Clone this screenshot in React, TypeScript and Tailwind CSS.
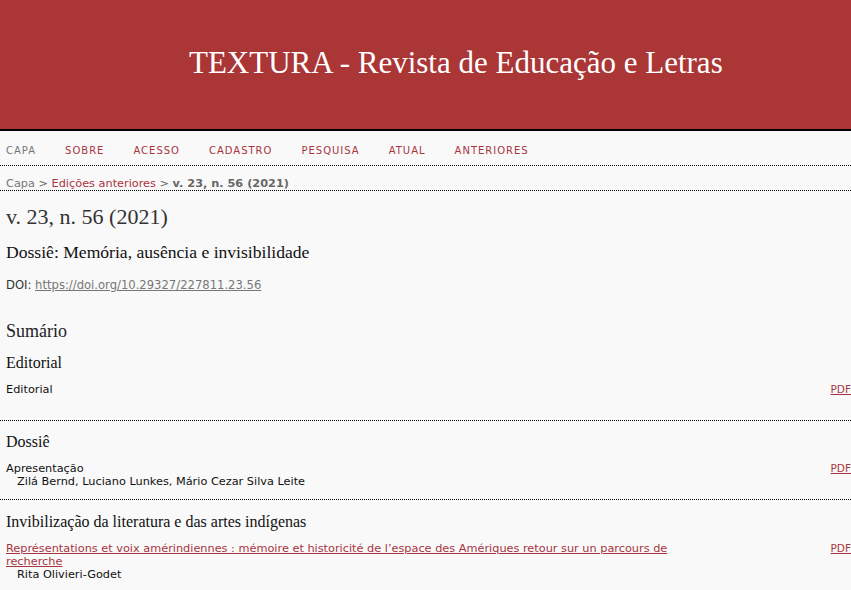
const sans = "font-['DejaVu_Sans','Verdana',sans-serif]"
const serif = "font-['Liberation_Serif','Times_New_Roman',serif]"

const navItems = ['CAPA', 'SOBRE', 'ACESSO', 'CADASTRO', 'PESQUISA', 'ATUAL', 'ANTERIORES']

function PdfLink() {
  return (
    <a href="#" className="text-[10.5px] leading-[13px] text-[#a8343f] underline shrink-0">
      PDF
    </a>
  )
}

export default function App() {
  return (
    <div className="min-h-[590px] w-[851px] bg-[#f9f9f9] text-[#111]">
      <header className="h-[131px] bg-[#aa3636] border-b-2 border-black flex items-center">
        <h1 className={`${serif} text-white text-[31px] leading-[36px] pl-[189px] -mt-[3px]`}>
          TEXTURA - Revista de Educação e Letras
        </h1>
      </header>

      <nav className={`${sans} flex gap-[29px] pl-[6px] pt-[14px] pb-[8px] border-b border-dotted border-black`}>
        {navItems.map((item, i) => (
          <a
            key={item}
            href="#"
            className={`text-[10px] leading-[12px] tracking-[1px] ${i === 0 ? 'text-[#777]' : 'text-[#a8343f]'}`}
          >
            {item}
          </a>
        ))}
      </nav>

      <div className={`${sans} text-[11.3px] leading-[13px] pl-[6px] pt-[11px] border-b border-dotted border-black text-[#666]`}>
        <a href="#" className="text-[#777]">Capa</a> &gt;{' '}
        <a href="#" className="text-[#a8343f]">Edições anteriores</a> &gt;{' '}
        <span className="font-bold text-[#666]">v. 23, n. 56 (2021)</span>
      </div>

      <main className="px-[6px]">
        <h2 className={`${serif} text-[22px] leading-[24px] mt-[14px] text-[#333]`}>v. 23, n. 56 (2021)</h2>
        <h3 className={`${serif} text-[17.6px] leading-[20px] mt-[13px] text-[#111]`}>
          Dossiê: Memória, ausência e invisibilidade
        </h3>
        <p className={`${sans} text-[11.6px] leading-[14px] mt-[16px] text-[#333]`}>
          DOI: <a href="#" className="text-[#777] underline">https://doi.org/10.29327/227811.23.56</a>
        </p>

        <h2 className={`${serif} text-[18px] leading-[22px] mt-[28px] text-[#222]`}>Sumário</h2>

        <section className="-mx-[6px] px-[6px] pb-[24px] border-b border-dotted border-black">
          <h3 className={`${serif} text-[16px] leading-[20px] mt-[11px]`}>Editorial</h3>
          <div className={`${sans} flex justify-between mt-[10px] -mr-[6px]`}>
            <div className="text-[11.3px] leading-[13px]">Editorial</div>
            <PdfLink />
          </div>
        </section>

        <section className="-mx-[6px] px-[6px] pb-[11px] border-b border-dotted border-black">
          <h3 className={`${serif} text-[16px] leading-[20px] mt-[11px]`}>Dossiê</h3>
          <div className={`${sans} flex justify-between mt-[10px] -mr-[6px]`}>
            <div className="text-[11.3px] leading-[13px]">
              <div>Apresentação</div>
              <div className="pl-[11px]">Zilá Bernd, Luciano Lunkes, Mário Cezar Silva Leite</div>
            </div>
            <PdfLink />
          </div>
        </section>

        <section>
          <h3 className={`${serif} text-[16px] leading-[20px] mt-[12px]`}>
            Invibilização da literatura e das artes indígenas
          </h3>
          <div className={`${sans} flex justify-between mt-[10px] -mr-[6px]`}>
            <div className="text-[11.3px] leading-[13px] w-[690px]">
              <a href="#" className="text-[#a8343f] underline">
                Représentations et voix amérindiennes : mémoire et historicité de l’espace des Amériques retour sur un parcours de recherche
              </a>
              <div className="pl-[11px]">Rita Olivieri-Godet</div>
            </div>
            <PdfLink />
          </div>
        </section>
      </main>
    </div>
  )
}
